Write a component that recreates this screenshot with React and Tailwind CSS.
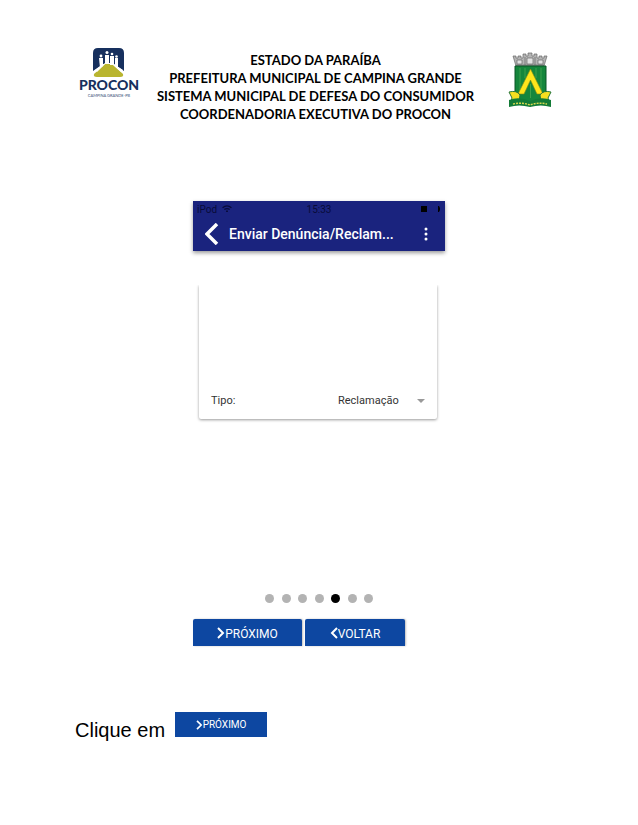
import React from "react";

function ProconLogo() {
  return (
    <svg viewBox="0 0 60 50" className="h-[50px] w-[60px]" role="img" aria-label="PROCON">
      <path d="M14 23V5q0-5 5-5h21q5 0 5 5v18L35 16H24z" fill="#17305e" />
      <path d="M15 26 26 16h7l11 10q1 3-3 3H18q-4 0-3-3z" fill="#b9b52f" />
      <g fill="#fff">
        <circle cx="22" cy="8" r="1.4" />
        <path d="M20 10h4v8l-3 2z" />
        <circle cx="28" cy="4.500" r="1.500" />
        <path d="M26 7h4v9h-4z" />
        <circle cx="33" cy="6" r="1.300" />
        <path d="M31 8h4v9h-4z" />
        <circle cx="37.500" cy="8.500" r="1.300" />
        <path d="M36 10h3v10l-3-2z" />
        <path d="m16 22 10-7h7l11 7-2 2-9-8h-7l-8 8z" />
      </g>
      <text x="30" y="42" textAnchor="middle" fontFamily="Lato, sans-serif" fontWeight="900" fontSize="14" fill="#17305e">PROCON</text>
      <text x="30" y="49" textAnchor="middle" fontFamily="Lato, sans-serif" fontSize="4" fill="#38507a">CAMPINA GRANDE-PB</text>
    </svg>
  );
}

function CityCrest() {
  return (
    <svg viewBox="0 0 44 56" className="h-14 w-11" role="img" aria-label="Brasão de Campina Grande">
      <g fill="#b4b4b4" stroke="#686868" strokeWidth=".7">
        <path d="M8 14 5 4h3v2h2V4h3v2h2V2h3v2h2V1h4v3h2V2h3v4h2V4h3v2h2V4h3l-3 10z" />
        <path d="M9 8h5v4H9zM19 6h6v6h-6zM30 8h5v4h-5z" fill="#e2e2e2" />
        <path d="M8 13h28M17 5v8M27 5v8" />
      </g>
      <path d="M7 14h31v25q0 9-15.500 15Q7 48 7 39z" fill="#15863c" stroke="#0b5527" />
      <path d="M12 16v26M17 16v10M28 16v10M33 16v26M22.500 32v14" stroke="#3da04c" strokeWidth="1" />
      <path d="M22.500 17 10 42h6l6.500-14L29 42h6z" fill="#ffe51c" stroke="#8b8b12" strokeWidth=".6" />
      <path d="M1 40q8-2 11 3l-1 7-9 2 2-6zM43 40q-8-2-11 3l1 7 9 2-2-6z" fill="#f6df20" stroke="#26763a" />
      <path d="M1 48q10-4 21 1 11-5 21-1v7q-10-3-21 0-11-3-21 0z" fill="#137b37" />
      <path d="M5 52q9-2 17 1 8-3 17-1" fill="none" stroke="#d8d94e" strokeWidth="1.400" strokeDasharray="2 1" />
    </svg>
  );
}

function Chevron({ left = false, className }) {
  return (
    <svg viewBox="0 0 8 12" className={className} fill="none" stroke="currentColor" strokeWidth="2" aria-hidden="true">
      <path d={left ? "M7 1 2 6l5 5" : "m1 1 5 5-5 5"} />
    </svg>
  );
}

function PageHeader() {
  return (
    <header className="grid grid-cols-[60px_1fr_60px] pt-12 pr-[86px] pl-[79px]">
      <ProconLogo />
      <h1 className="pt-[3px] text-center font-['Lato',sans-serif] text-[13px] leading-[18px] font-bold whitespace-nowrap">
        ESTADO DA PARAÍBA
        <br />
        PREFEITURA MUNICIPAL DE CAMPINA GRANDE
        <br />
        SISTEMA MUNICIPAL DE DEFESA DO CONSUMIDOR
        <br />
        COORDENADORIA EXECUTIVA DO PROCON
      </h1>
      <div className="justify-self-end pt-1">
        <CityCrest />
      </div>
    </header>
  );
}

function AppBar() {
  return (
    <div className="bg-[#1a237e] font-['Roboto',sans-serif] shadow-[0_2px_4px_rgba(0,0,0,0.4)]">
      <div className="grid h-4 grid-cols-3 items-center pr-1 pl-1 text-[10px] text-[#080b38]">
        <span className="flex items-center gap-1">
          iPod
          <svg viewBox="0 0 12 9" className="h-2 w-3" fill="none" stroke="currentColor" strokeWidth="1.500" aria-hidden="true">
            <path d="M1 3q5-4 10 0M3 5q3-2 6 0M5 7h2" />
          </svg>
        </span>
        <span className="text-center">15:33</span>
        <svg viewBox="0 0 20 8" className="h-2 w-5 justify-self-end" fill="#000000" aria-hidden="true">
          <path d="M0 1h6v6H0zM17 1h1l1 2v2l-1 2h-1z" />
        </svg>
      </div>
      <div className="flex h-[34px] items-center pr-3 pl-3 text-white">
        <button aria-label="Voltar à tela anterior" className="w-6">
          <svg viewBox="0 0 14 22" className="h-[22px] w-3.5" fill="none" stroke="currentColor" strokeWidth="3.500" aria-hidden="true">
            <path d="M12 1 2 11l10 10" />
          </svg>
        </button>
        <h2 className="flex-1 text-sm font-medium whitespace-nowrap">Enviar Denúncia/Reclam...</h2>
        <button aria-label="Mais opções">
          <svg viewBox="0 0 14 14" className="h-3.5 w-3.5" fill="currentColor" aria-hidden="true">
            <circle cx="7" cy="2" r="1.500" />
            <circle cx="7" cy="7" r="1.500" />
            <circle cx="7" cy="12" r="1.500" />
          </svg>
        </button>
      </div>
    </div>
  );
}

function ComplaintCard() {
  return (
    <div className="mt-[34px] mr-2 ml-1.5 flex h-[134px] items-end rounded-b-xs px-3 pb-[9px] font-['Roboto',sans-serif] text-[11px] text-[#333333] shadow-[0_1px_3px_rgba(0,0,0,0.4)] [clip-path:inset(0_-4px_-4px_-4px)]">
      <label htmlFor="tipo" className="flex-1 leading-[18px]">Tipo:</label>
      <div className="flex items-center">
        <select id="tipo" defaultValue="Reclamação" className="h-[18px] w-[79px] appearance-none bg-transparent leading-[18px]">
          <option>Reclamação</option>
          <option>Denúncia</option>
        </select>
        <svg viewBox="0 0 8 4" className="h-1 w-2" fill="#999999" aria-hidden="true">
          <path d="M0 0h8L4 4z" />
        </svg>
      </div>
    </div>
  );
}

function StepDots() {
  const steps = [1, 2, 3, 4, 5, 6, 7];
  return (
    <div className="mx-auto mt-[175px] flex w-[108px] justify-between">
      {steps.map((step) => (
        <span key={step} className={step === 5 ? "size-[9px] rounded-full bg-black" : "size-[9px] rounded-full bg-[#b3b3b3]"} />
      ))}
    </div>
  );
}

export default function App() {
  return (
    <div className="bg-white pb-12 text-black">
      <PageHeader />
      <main className="pt-[78px]">
        <section className="mx-auto w-[252px]">
          <AppBar />
          <ComplaintCard />
          <StepDots />
          <div className="mt-4 flex gap-[3px] font-['Roboto',sans-serif] text-xs text-white">
            <button className="flex h-[27px] w-[109px] items-center justify-center rounded-t-xs bg-[#0d47a1] shadow-[1px_0_2px_rgba(0,0,0,0.25)]">
              <Chevron className="h-3 w-2" />
              <span className="pt-0.5">PRÓXIMO</span>
            </button>
            <button className="flex h-[27px] w-[100px] items-center justify-center rounded-t-xs bg-[#0d47a1] shadow-[1px_0_2px_rgba(0,0,0,0.25)]">
              <Chevron left className="h-3 w-2" />
              <span className="pt-0.5">VOLTAR</span>
            </button>
          </div>
        </section>
        <div className="mt-[66px] flex items-start gap-2.5 pl-[75px]">
          <p className="pt-1.5 font-['Liberation_Sans',Arial,sans-serif] text-xl leading-6">Clique em</p>
          <button className="flex h-[25px] w-[92px] items-center justify-center bg-[#0d47a1] font-['Roboto',sans-serif] text-[10px] text-white">
            <Chevron className="h-2.5 w-[7px]" />
            PRÓXIMO
          </button>
        </div>
      </main>
    </div>
  );
}
